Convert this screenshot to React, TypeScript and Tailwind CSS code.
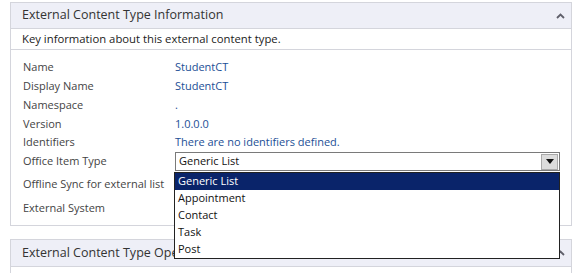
import React from "react";

const font = { fontFamily: '"Open Sans", "Noto Sans", "DejaVu Sans", sans-serif' };

function Caret() {
  return (
    <svg width="9" height="6" viewBox="0 0 9 6">
      <path d="M1 5 L4.5 1.5 L8 5" stroke="#5f5f6a" strokeWidth="1.8" fill="none" />
    </svg>
  );
}

const rows: { label: string; value?: string; h: string }[] = [
  { label: "Name", value: "StudentCT", h: "h-[19px]" },
  { label: "Display Name", value: "StudentCT", h: "h-[19px]" },
  { label: "Namespace", value: ".", h: "h-[19px]" },
  { label: "Version", value: "1.0.0.0", h: "h-[19px]" },
  { label: "Identifiers", value: "There are no identifiers defined.", h: "h-[17px]" },
];

export default function App() {
  return (
    <div className="w-[575px] h-[273px] overflow-hidden bg-white relative text-[11px]" style={font}>
      <div className="pt-[2px] pl-[10px] pr-[3px]">
        {/* Panel 1 */}
        <div className="border border-[#d4d5dc]">
          <div className="h-[26px] bg-[#eeeff7] border-b border-[#d4d5dc] flex items-center justify-between pl-[11px] pr-[6px]">
            <span className="text-[12.5px] text-[#333]">External Content Type Information</span>
            <Caret />
          </div>
          <div className="h-[21px] border-b border-[#d4d5dc] flex items-center pl-[11px] text-[11.3px] text-[#222]">
            Key information about this external content type.
          </div>
          <div className="pt-[8px] pb-[5px] pl-[12px]">
            {rows.map((r) => (
              <div key={r.label} className={`flex items-center ${r.h}`}>
                <div className="w-[152px] text-[#444]">{r.label}</div>
                <div className="text-[#1c4f96]">{r.value}</div>
              </div>
            ))}
            <div className="flex items-center h-[21px]">
              <div className="w-[152px] text-[#444]">Office Item Type</div>
              <div className="w-[385px] h-[19px] border border-[#7a7a7a] flex items-center justify-between pl-[3px] pr-[1px]">
                <span className="text-[#111]">Generic List</span>
                <div className="w-[17px] h-[16px] bg-[#dcdcdc] border border-[#a9a9a9] flex items-center justify-center">
                  <svg width="8" height="5" viewBox="0 0 8 5">
                    <path d="M0 0 H8 L4 5 Z" fill="#111" />
                  </svg>
                </div>
              </div>
            </div>
            <div className="flex items-center h-[24px]">
              <div className="w-[152px] text-[#444]">Offline Sync for external list</div>
            </div>
            <div className="flex items-center h-[24px]">
              <div className="w-[152px] text-[#444]">External System</div>
            </div>
          </div>
        </div>

        {/* Panel 2 */}
        <div className="mt-[13px] border border-[#d4d5dc]">
          <div className="h-[27px] bg-[#eeeff7] border-b border-[#d4d5dc] flex items-center justify-between pl-[11px] pr-[6px]">
            <span className="text-[12.5px] text-[#333]">External Content Type Operations</span>
            <Caret />
          </div>
          <div className="h-[21px] flex items-center pl-[11px] text-[11.3px] text-[#222]">
            Use this part to manage the operations of this external content type.
          </div>
        </div>
      </div>

      {/* Dropdown list overlay */}
      <div className="absolute left-[174px] top-[172px] w-[386px] h-[87px] bg-white border border-[#222] text-[11px] text-[#111]">
        <div className="h-[17px] bg-[#0a246a] text-white flex items-center pl-[3px]">Generic List</div>
        <div className="h-[17px] flex items-center pl-[3px]">Appointment</div>
        <div className="h-[17px] flex items-center pl-[3px]">Contact</div>
        <div className="h-[17px] flex items-center pl-[3px]">Task</div>
        <div className="h-[17px] flex items-center pl-[3px]">Post</div>
      </div>
    </div>
  );
}
